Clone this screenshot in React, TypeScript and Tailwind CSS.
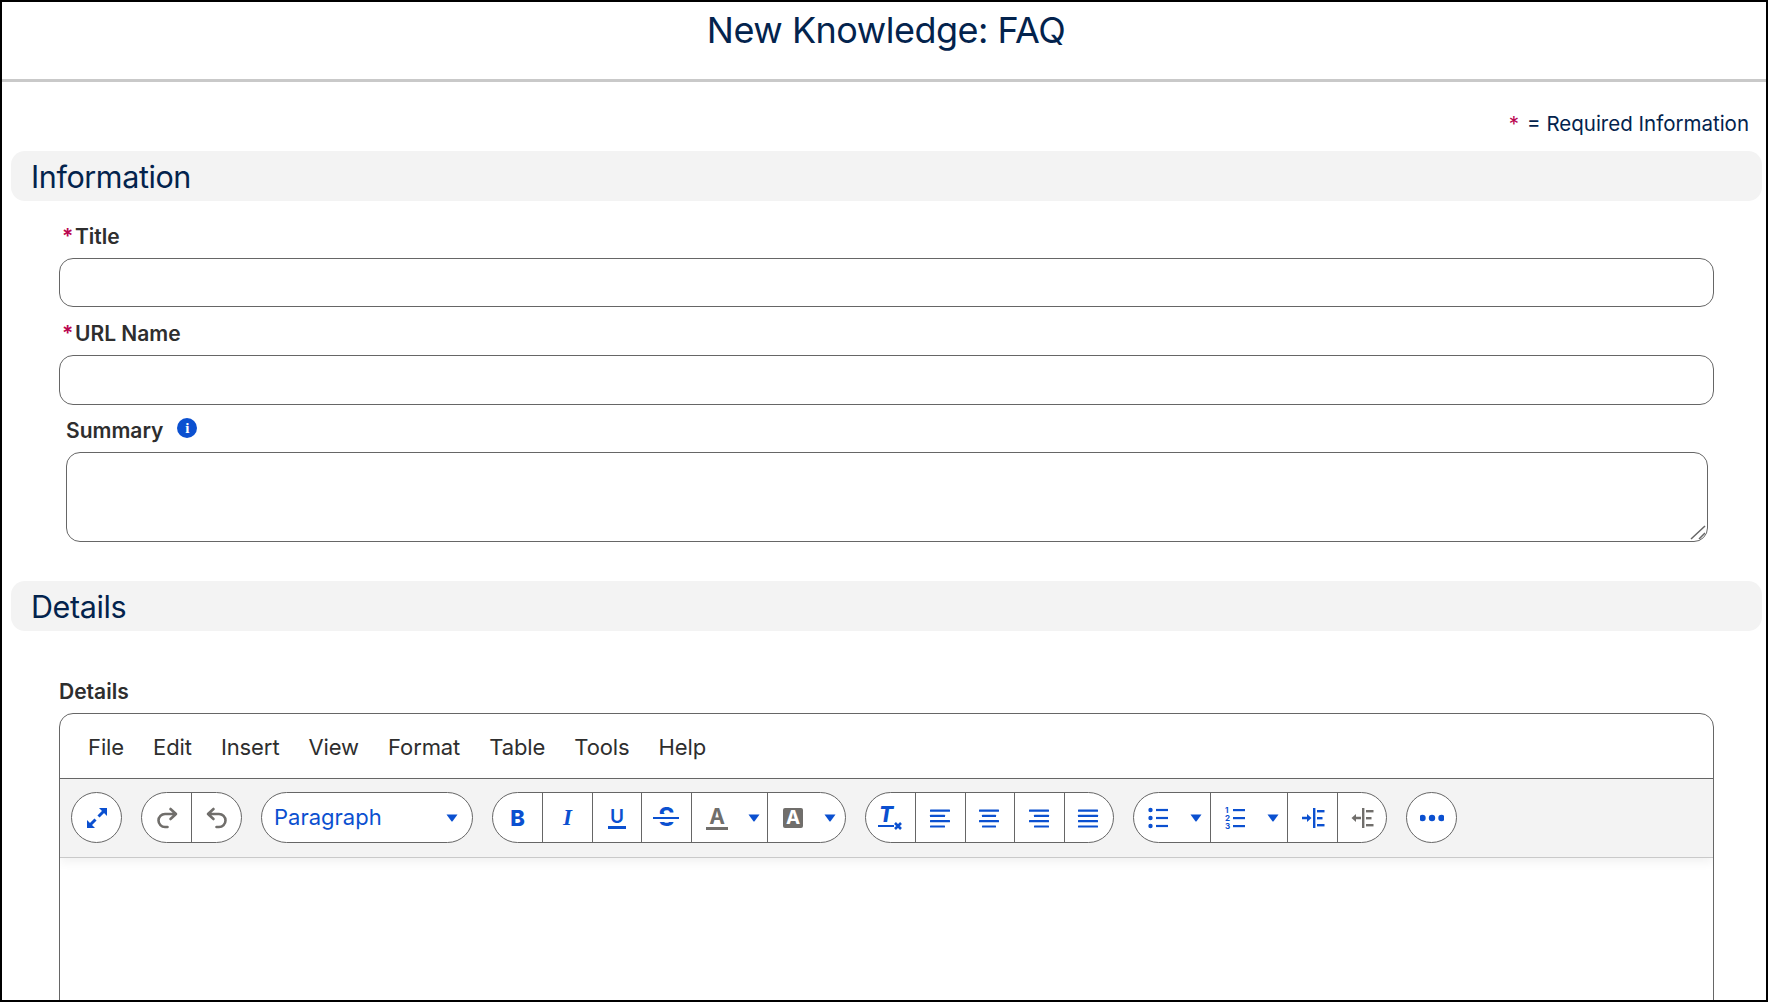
import type { ReactNode } from 'react';

const BLUE = '#0b50d0';
const GRAY = '#706e6b';

function Caret() {
  return (
    <svg width="12" height="8" viewBox="0 0 12 8">
      <path d="M0.5 0.5h11L6.6 7.2a.8.8 0 0 1-1.2 0z" fill={BLUE} />
    </svg>
  );
}

function Icon({ children }: { children: ReactNode }) {
  return (
    <svg width="24" height="24" viewBox="0 0 24 24" fill="none">
      {children}
    </svg>
  );
}

function Cell({ className, children }: { className: string; children: ReactNode }) {
  return (
    <div className={`flex h-full shrink-0 items-center justify-center border-l border-[#666666] first:border-l-0 ${className}`}>
      {children}
    </div>
  );
}

function DropCell({ className, children }: { className: string; children: ReactNode }) {
  return (
    <div className={`flex h-full shrink-0 items-center border-l border-[#666666] first:border-l-0 ${className}`}>
      <div className="ml-[12px] flex w-[26px] justify-center">{children}</div>
      <div className="ml-[18px]">
        <Caret />
      </div>
    </div>
  );
}

function Group({ children }: { children: ReactNode }) {
  return <div className="flex h-[51px] shrink-0 overflow-hidden rounded-full border border-[#666666] bg-white">{children}</div>;
}

function Lines({ rows, color = BLUE }: { rows: [number, number][]; color?: string }) {
  return (
    <Icon>
      {rows.map(([x, w], i) => (
        <rect key={i} x={x} y={3.5 + i * 5.3} width={w} height="2.2" rx="0.5" fill={color} />
      ))}
    </Icon>
  );
}

function Section({ title }: { title: string }) {
  return (
    <div className="mr-[4px] ml-[9px] flex h-[50px] items-center rounded-[14px] bg-[#f3f3f3] pt-[2px] pl-[20px] text-[30.5px] leading-none tracking-[-0.4px] text-[#03234d]">
      {title}
    </div>
  );
}

function Label({ required, children }: { required?: boolean; children: ReactNode }) {
  return (
    <div className="flex h-[24px] items-center pb-[1px] text-[21px] leading-none font-semibold text-[#2e2e2e]">
      {required && <span className="mr-[5px] w-[8px] text-[#ba0550]">*</span>}
      {children}
    </div>
  );
}

const menuItems = ['File', 'Edit', 'Insert', 'View', 'Format', 'Table', 'Tools', 'Help'];

export default function App() {
  return (
    <div
      className="h-[1002px] overflow-hidden border-2 border-black bg-white"
      style={{ fontFamily: 'Inter, "Noto Sans", sans-serif' }}
    >
      <header className="flex h-[80px] items-start justify-center border-b-[3px] border-[#c9c9c9] pt-[8px] pl-[4px] text-[36px] leading-[40px] tracking-[-0.5px] text-[#03234d]">
        New Knowledge: FAQ
      </header>

      <div className="flex h-[69px] items-start justify-end pt-[28.5px] pr-[17px] text-[20.5px] leading-[26px] text-[#03234d]">
        <span className="mr-[8px] text-[#ba0550]">*</span>= Required Information
      </div>

      <Section title="Information" />

      <div className="mt-[24px] pr-[52px] pl-[57px]">
        <div className="pl-[3px]">
          <Label required>Title</Label>
        </div>
        <input className="mt-[9px] block h-[49px] w-full rounded-[14px] border border-[#666666] bg-white" />
        <div className="mt-[15px] pl-[3px]">
          <Label required>URL Name</Label>
        </div>
        <input className="mt-[9px] block h-[50px] w-full rounded-[14px] border border-[#666666] bg-white" />
      </div>

      <div className="mt-[13px] pr-[58px] pl-[64px]">
        <div className="flex items-center">
          <Label>Summary</Label>
          <span className="mb-[5px] ml-[14px] flex h-[20px] w-[20px] items-center justify-center rounded-full bg-[#0b50d0] text-[15px] leading-none font-bold text-white" style={{ fontFamily: '"Liberation Serif", serif' }}>
            i
          </span>
        </div>
        <div className="relative mt-[9px]">
          <textarea className="block h-[90px] w-full resize-none rounded-[14px] border border-[#666666] bg-white" />
          <svg className="absolute right-[1px] bottom-[2px]" width="17" height="16" viewBox="0 0 17 16" fill="none" stroke="#666666" strokeWidth="1.5">
            <path d="M1 15L15 2M9 15l6-6" />
          </svg>
        </div>
      </div>

      <div className="mt-[39px]">
        <Section title="Details" />
      </div>

      <div className="mt-[49px] pr-[52px] pl-[57px]">
        <Label>Details</Label>
        <div className="mt-[9px] h-[300px] overflow-hidden rounded-t-[14px] border border-[#666666]">
          <nav className="flex h-[64px] items-center gap-[29px] pt-[2px] pl-[28px] text-[22px] tracking-[-0.1px] text-[#2e2e2e]">
            {menuItems.map((item) => (
              <span key={item}>{item}</span>
            ))}
          </nav>

          <div className="flex h-[80px] items-center gap-[19px] border-t border-b border-t-[#666666] border-b-[#c9c9c9] bg-[#f3f3f3] pb-[1px] pl-[11px] shadow-[0_4px_10px_rgba(0,0,0,0.06)]">
            <Group>
              <Cell className="w-[49px]">
                <Icon>
                  <path d="M13.5 10.5L18.5 5.5M5.5 18.5l5-5" stroke={BLUE} strokeWidth="3" />
                  <path d="M14 2h8v8zM10 22H2v-8z" fill={BLUE} />
                </Icon>
              </Cell>
            </Group>

            <Group>
              <Cell className="w-[49px]">
                <Icon>
                  <path d="M21 8H10a6.5 6.5 0 0 0 0 13h2.5M15.5 3l5.5 5-5.5 5" stroke={GRAY} strokeWidth="2.6" strokeLinecap="round" strokeLinejoin="round" />
                </Icon>
              </Cell>
              <Cell className="w-[50px]">
                <Icon>
                  <path d="M3 8h11a6.5 6.5 0 0 1 0 13h-2.5M8.5 3L3 8l5.5 5" stroke={GRAY} strokeWidth="2.6" strokeLinecap="round" strokeLinejoin="round" />
                </Icon>
              </Cell>
            </Group>

            <Group>
              <div className="flex h-full w-[210px] items-center justify-between pr-[14px] pl-[12px] text-[22px] text-[#0b50d0]">
                Paragraph
                <Caret />
              </div>
            </Group>

            <Group>
              <Cell className="w-[49px]">
                <span className="text-[22px] leading-none font-extrabold text-[#0b50d0]">B</span>
              </Cell>
              <Cell className="w-[50px]">
                <span className="text-[23px] leading-none font-bold text-[#0b50d0] italic" style={{ fontFamily: '"Liberation Serif", serif' }}>
                  I
                </span>
              </Cell>
              <Cell className="w-[49px]">
                <span className="border-b-[3px] border-[#0b50d0] px-[2px] text-[19px] leading-[19px] font-semibold text-[#0b50d0]">U</span>
              </Cell>
              <Cell className="w-[50px]">
                <span className="relative text-[25px] leading-none font-bold text-[#0b50d0]">
                  S
                  <span className="absolute top-1/2 left-[-5px] h-[8px] w-[26px] -translate-y-1/2 border-y-[3px] border-y-white bg-[#0b50d0]" />
                </span>
              </Cell>
              <DropCell className="w-[76px]">
                <span className="border-b-[3px] border-[#706e6b] px-[3px] text-[21px] leading-[21px] font-bold text-[#706e6b]">A</span>
              </DropCell>
              <DropCell className="w-[78px]">
                <span className="flex h-[20px] w-[20px] items-center justify-center rounded-[2px] bg-[#706e6b] text-[19px] leading-none font-bold text-white">A</span>
              </DropCell>
            </Group>

            <Group>
              <Cell className="w-[49px]">
                <span className="relative mr-[3px] h-[24px] w-[24px]">
                  <span className="absolute top-[-1px] left-[1px] border-b-[2.5px] border-[#0b50d0] px-[1px] text-[21px] leading-[20px] font-extrabold text-[#0b50d0] italic">T</span>
                  <svg className="absolute right-[-2px] bottom-[-1px]" width="10" height="10" viewBox="0 0 10 10">
                    <path d="M2 2l6 6M8 2l-6 6" stroke={BLUE} strokeWidth="2.6" />
                  </svg>
                </span>
              </Cell>
              <Cell className="w-[50px]">
                <Lines rows={[[1, 20], [1, 15], [1, 20], [1, 15]]} />
              </Cell>
              <Cell className="w-[49px]">
                <Lines rows={[[1, 20], [4, 14], [1, 20], [4, 14]]} />
              </Cell>
              <Cell className="w-[50px]">
                <Lines rows={[[1, 20], [6, 15], [1, 20], [6, 15]]} />
              </Cell>
              <Cell className="w-[49px]">
                <Lines rows={[[1, 20], [1, 20], [1, 20], [1, 20]]} />
              </Cell>
            </Group>

            <Group>
              <DropCell className="w-[76px]">
                <Icon>
                  {[4, 12, 20].map((y) => (
                    <g key={y}>
                      <circle cx="3.5" cy={y} r="2.2" fill={BLUE} />
                      <rect x="9" y={y - 1.1} width="12" height="2.2" fill={BLUE} />
                    </g>
                  ))}
                </Icon>
              </DropCell>
              <DropCell className="w-[77px]">
                <svg width="24" height="24" viewBox="0 0 24 24">
                  {[1, 2, 3].map((n, i) => (
                    <g key={n}>
                      <text x="1" y={6.5 + i * 8} fontSize="8" fontWeight="700" fill={BLUE}>
                        {n}
                      </text>
                      <rect x="9" y={3 + i * 8} width="12" height="2.2" fill={BLUE} />
                    </g>
                  ))}
                </svg>
              </DropCell>
              <Cell className="w-[50px]">
                <Icon>
                  <path d="M1 12h6" stroke={BLUE} strokeWidth="2.4" />
                  <path d="M6 8l4.5 4L6 16z" fill={BLUE} />
                  <rect x="12" y="2" width="2.4" height="20" fill={BLUE} />
                  <rect x="16" y="4" width="7.5" height="2.4" fill={BLUE} />
                  <rect x="16" y="11" width="5.5" height="2.4" fill={BLUE} />
                  <rect x="16" y="18" width="7.5" height="2.4" fill={BLUE} />
                </Icon>
              </Cell>
              <Cell className="w-[49px]">
                <Icon>
                  <path d="M5 12h6" stroke={GRAY} strokeWidth="2.4" />
                  <path d="M6 8l-4.5 4L6 16z" fill={GRAY} />
                  <rect x="12" y="2" width="2.4" height="20" fill={GRAY} />
                  <rect x="16" y="4" width="7.5" height="2.4" fill={GRAY} />
                  <rect x="16" y="11" width="5.5" height="2.4" fill={GRAY} />
                  <rect x="16" y="18" width="7.5" height="2.4" fill={GRAY} />
                </Icon>
              </Cell>
            </Group>

            <Group>
              <Cell className="w-[49px]">
                <Icon>
                  <circle cx="2.5" cy="12" r="3.2" fill={BLUE} />
                  <circle cx="12" cy="12" r="3.2" fill={BLUE} />
                  <circle cx="21.5" cy="12" r="3.2" fill={BLUE} />
                </Icon>
              </Cell>
            </Group>
          </div>
        </div>
      </div>
    </div>
  );
}
